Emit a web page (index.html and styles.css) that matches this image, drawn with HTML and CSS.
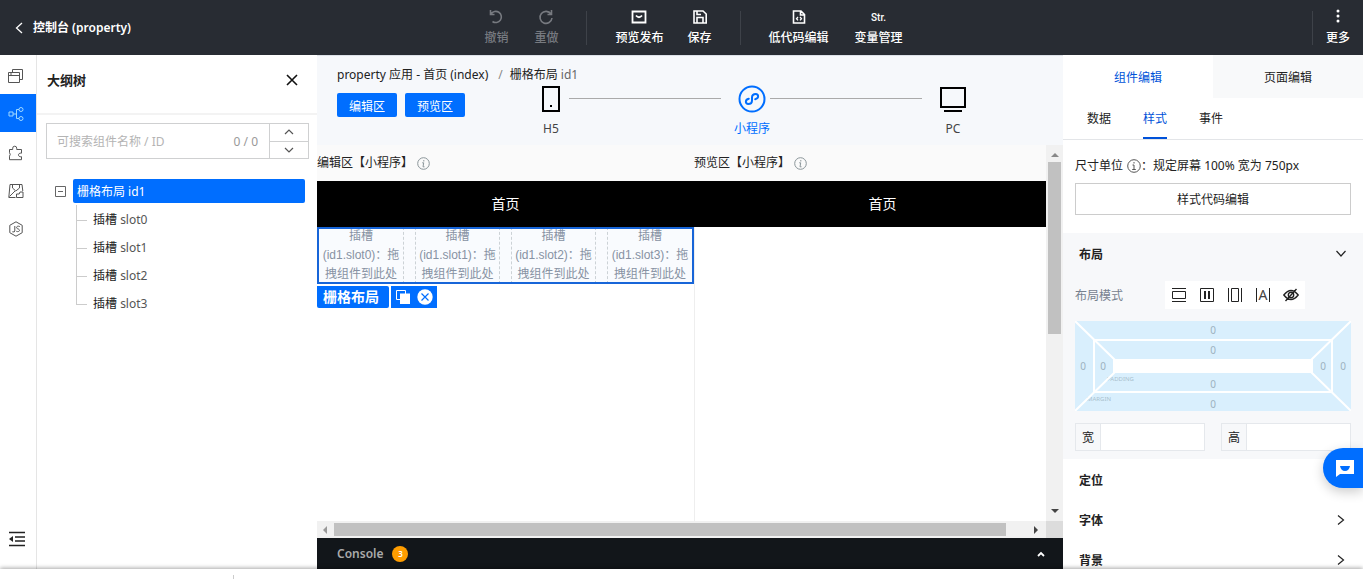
FILE: index.html
```html
<!DOCTYPE html>
<html lang="zh-CN">
<head>
<meta charset="utf-8">
<title>控制台 (property)</title>
<link rel="stylesheet" href="styles.css">
</head>
<body>
<header class="topbar">
  <div class="topbar-side">
    <a class="brand" href="#">
      <svg width="8" height="12" viewBox="0 0 8 12" fill="none" stroke="currentColor" stroke-width="1.3"><path d="M7 1 1.500 6 7 11"/></svg>
      <span>控制台 (property)</span>
    </a>
  </div>
  <nav class="tools">
    <div class="tool-group">
      <button class="tool" disabled>
        <svg width="16" height="16" viewBox="0 0 16 16" fill="none" stroke="currentColor" stroke-width="1.6"><path d="M2.500 1v4.500h4M3 5A5.600 5.600 0 1 1 4.500 12.500"/></svg>
        <span>撤销</span>
      </button>
      <button class="tool" disabled>
        <svg width="16" height="16" viewBox="0 0 16 16" fill="none" stroke="currentColor" stroke-width="1.6"><path d="M13.500 1v4.500h-4M13 5A6 6 0 1 0 14 9"/></svg>
        <span>重做</span>
      </button>
    </div>
    <div class="rule"></div>
    <div class="tool-group tight">
      <button class="tool">
        <svg width="16" height="16" viewBox="0 0 16 16" fill="none" stroke="currentColor" stroke-width="1.8"><path d="M1.500 2.500h13v11h-13z"/><path d="M5 6.500q3 3.500 6 0"/></svg>
        <span>预览发布</span>
      </button>
      <button class="tool">
        <svg width="16" height="16" viewBox="0 0 16 16" fill="none" stroke="currentColor" stroke-width="1.6"><path d="M2 2h9l3.200 3v9H2zM5 14V8.500h6V14M5 2v3.500h4"/></svg>
        <span>保存</span>
      </button>
    </div>
    <div class="rule"></div>
    <div class="tool-group">
      <button class="tool">
        <svg width="16" height="16" viewBox="0 0 16 16" fill="none" stroke="currentColor" stroke-width="1.6"><path d="M2.500 2h7.500l3.500 3.500V14h-11zM9.500 2v4h4"/><path d="M7 8 5.500 9.700 7 11.400M9 8l1.500 1.700L9 11.400" stroke-width="1.300"/></svg>
        <span>低代码编辑</span>
      </button>
      <button class="tool">
        <span class="glyph">Str.</span>
        <span>变量管理</span>
      </button>
    </div>
  </nav>
  <div class="topbar-side end">
    <div class="rule"></div>
    <button class="tool">
      <svg width="16" height="16" viewBox="0 0 16 16" fill="currentColor"><circle cx="8" cy="2" r="1.500"/><circle cx="8" cy="7" r="1.500"/><circle cx="8" cy="12" r="1.500"/></svg>
      <span>更多</span>
    </button>
  </div>
</header>

<main class="workspace">
  <nav class="rail">
    <button class="rail-item" aria-label="页面"><svg width="16" height="16" viewBox="0 0 16 16" fill="none" stroke="currentColor"><path d="M.5 4.500h11v10H.5zM.5 7.500h11M2 6h2M4.500 4.500v-3h10v10h-3"/></svg></button>
    <button class="rail-item active" aria-label="大纲树"><svg width="16" height="16" viewBox="0 0 16 16" fill="none" stroke="currentColor"><path d="M1 6h4v4H1zM5 8h3M11 3.500H8.500v9H11"/><circle cx="13" cy="3.500" r="2"/><circle cx="13" cy="12.500" r="2"/></svg></button>
    <button class="rail-item" aria-label="组件"><svg width="16" height="16" viewBox="0 0 16 16" fill="none" stroke="currentColor"><path d="M1.500 4.500h3.200V3.200a2 2 0 0 1 4 0v1.300h4.800v3.700c-4-.8-4 4.300 0 3.500v3h-12v-3.500q1.500-2 0-3.500z"/></svg></button>
    <button class="rail-item" aria-label="素材"><svg width="16" height="16" viewBox="0 0 16 16" fill="none" stroke="currentColor"><path d="M7.500 14.500H.8L2 1.500h12l.8 6.500M4.500 1.500V5l3.300 3 3.700-3V1.500M1.500 13.500 7 8M8.500 14.500h6.500V9h-3l-.8 2H8.500z"/></svg></button>
    <button class="rail-item" aria-label="脚本"><svg width="16" height="16" viewBox="0 0 16 16" fill="none" stroke="currentColor"><path d="M8 .8 14.200 4.300v7.400L8 15.200 1.800 11.700V4.300zM6.800 5v5q0 1.500-2.500.8M11.800 5.500C8 4.200 8 7.500 9.700 7.800c3 .6 2 3.800-1.400 2.500"/></svg></button>
    <button class="rail-item last" aria-label="收起"><svg width="18" height="16" viewBox="0 0 18 16" fill="none" stroke="#222" stroke-width="1.500"><path d="M1 1.500h16M7 6h10M7 10h10M1 14.500h16"/><path d="M1 8l4-3v6z" fill="#222" stroke="none"/></svg></button>
  </nav>

  <aside class="outline">
    <div class="outline-head">
      <h2>大纲树</h2>
      <button class="plain" aria-label="关闭"><svg width="12" height="12" viewBox="0 0 12 12" stroke="#111" stroke-width="1.600"><path d="M1 1l10 10M11 1 1 11"/></svg></button>
    </div>
    <div class="search">
      <input type="text" aria-label="搜索组件" placeholder="可搜索组件名称 / ID">
      <span class="count">0 / 0</span>
      <div class="stepper">
        <button aria-label="上一个"><svg width="10" height="6" viewBox="0 0 10 6" fill="none" stroke="currentColor" stroke-width="1.200"><path d="M1 5l4-4 4 4"/></svg></button>
        <button aria-label="下一个"><svg width="10" height="6" viewBox="0 0 10 6" fill="none" stroke="currentColor" stroke-width="1.200"><path d="M1 1l4 4 4-4"/></svg></button>
      </div>
    </div>
    <div class="tree">
      <div class="tree-root">
        <button class="plain" aria-label="折叠"><svg width="11" height="11" viewBox="0 0 11 11" fill="none" stroke="#666"><path d="M.5.5h10v10H.5zM3 5.500h5"/></svg></button>
        <a class="node selected" href="#">栅格布局 id1</a>
      </div>
      <ul class="branch">
        <li><a href="#">插槽 <span class="slot-name">slot0</span></a></li>
        <li><a href="#">插槽 <span class="slot-name">slot1</span></a></li>
        <li><a href="#">插槽 <span class="slot-name">slot2</span></a></li>
        <li><a href="#">插槽 <span class="slot-name">slot3</span></a></li>
      </ul>
    </div>
  </aside>

  <section class="stage">
    <div class="stage-head">
      <div class="crumbs"><span>property 应用 - 首页 (index)</span><span class="slash">/</span><span>栅格布局 <span class="muted">id1</span></span></div>
      <div class="stage-row">
        <div class="views">
          <button class="primary">编辑区</button>
          <button class="primary">预览区</button>
        </div>
        <div class="steps">
          <button class="step"><svg width="28" height="28" viewBox="0 0 28 28" fill="none" stroke="#000" stroke-width="2"><path d="M6 2h16v24H6z"/><path d="M13 21h2"/></svg><span>H5</span></button>
          <div class="link"></div>
          <button class="step current"><svg width="28" height="28" viewBox="0 0 28 28" fill="none" stroke="currentColor" stroke-width="2"><circle cx="14" cy="14" r="12.500"/><path d="M10.800 13.800c-4 .8-3.600 5.200-.6 5.200 2.200 0 3.800-1.500 3.800-3.500v-3c0-2 1.600-3.500 3.800-3.500 3 0 3.400 4.400-.6 5.200" stroke-linecap="round"/></svg><span>小程序</span></button>
          <div class="link"></div>
          <button class="step"><svg width="28" height="28" viewBox="0 0 28 28" fill="none" stroke="#000" stroke-width="2"><path d="M2 3h24v19H2zM5 26h18"/></svg><span>PC</span></button>
        </div>
      </div>
    </div>

    <div class="canvas-frame">
      <div class="canvas">
        <div class="pane">
          <div class="pane-title"><span>编辑区【小程序】</span><svg width="13" height="13" viewBox="0 0 13 13" fill="none" stroke="currentColor"><circle cx="6.500" cy="6.500" r="5.800"/><path d="M6.800 3v1.500M5.200 5.800h1.500L6 9.800h1.500"/></svg></div>
          <div class="page-bar">首页</div>
          <div class="grid-block">
            <div class="slot">插槽(id1.slot0)：拖拽组件到此处</div>
            <div class="slot">插槽(id1.slot1)：拖拽组件到此处</div>
            <div class="slot">插槽(id1.slot2)：拖拽组件到此处</div>
            <div class="slot">插槽(id1.slot3)：拖拽组件到此处</div>
          </div>
          <div class="tags">
            <span class="tag">栅格布局</span>
            <span class="tag-actions">
              <button class="plain" aria-label="复制"><svg width="16" height="16" viewBox="0 0 16 16"><path d="M5 10.500H1.500v-9h9V5" fill="none" stroke="#fff"/><path d="M5 4.500h10V15H5z" fill="#fff"/></svg></button>
              <button class="plain" aria-label="删除"><svg width="16" height="16" viewBox="0 0 16 16"><circle cx="8" cy="8" r="7.700" fill="#fff"/><path d="M4.500 4.500l7 7M11.500 4.500l-7 7" stroke="#006eff" stroke-width="1.200"/></svg></button>
            </span>
          </div>
        </div>
        <div class="pane">
          <div class="pane-title"><span>预览区【小程序】</span><svg width="13" height="13" viewBox="0 0 13 13" fill="none" stroke="currentColor"><circle cx="6.500" cy="6.500" r="5.800"/><path d="M6.800 3v1.500M5.200 5.800h1.500L6 9.800h1.500"/></svg></div>
          <div class="page-bar">首页</div>
        </div>
      </div>
      <div class="scroll-y"><svg width="8" height="5"><path d="M0 5l4-4 4 4z" fill="#888"/></svg><div class="thumb"></div><svg class="push" width="8" height="5"><path d="M0 0h8L4 4z" fill="#444"/></svg></div>
      <div class="scroll-x"><svg width="5" height="8"><path d="M5 0v8L1 4z" fill="#999"/></svg><div class="thumb"></div><svg class="push" width="5" height="8"><path d="M0 0l4 4-4 4z" fill="#444"/></svg></div>
      <div class="scroll-corner"></div>
    </div>

    <div class="console">
      <span>Console</span><span class="badge">3</span>
      <button class="plain push" aria-label="展开"><svg width="8" height="6" viewBox="0 0 8 6" fill="none" stroke="#fff" stroke-width="1.800"><path d="M1 5l3-3 3 3"/></svg></button>
    </div>
  </section>

  <aside class="props">
    <div class="tabs">
      <button class="tab on">组件编辑</button>
      <button class="tab">页面编辑</button>
    </div>
    <div class="subtabs">
      <button class="subtab">数据</button>
      <button class="subtab on">样式</button>
      <button class="subtab">事件</button>
    </div>
    <div class="unit-block">
      <div class="unit"><span>尺寸单位</span><svg width="14" height="14" viewBox="0 0 14 14" fill="none" stroke="#555"><circle cx="7" cy="7" r="6.300"/><path d="M7 3v1.500M5.500 6H7v4M5.200 10.500h3.600"/></svg><span>：规定屏幕 100% 宽为 750px</span></div>
      <button class="code-btn">样式代码编辑</button>
    </div>
    <div class="layout-block">
      <button class="fold"><span>布局</span><svg width="12" height="8" viewBox="0 0 12 8" fill="none" stroke="#222" stroke-width="1.200"><path d="M1.500 1 6 6l4.500-5"/></svg></button>
      <div class="mode">
        <span>布局模式</span>
        <div class="mode-icons">
          <button class="plain" aria-label="块级"><svg width="16" height="16" viewBox="0 0 16 16" fill="none" stroke="#222"><path d="M1 1.500h14M1 14.500h14M1.500 4.500h13v7h-13z"/></svg></button>
          <button class="plain" aria-label="弹性"><svg width="16" height="16" viewBox="0 0 16 16" fill="none" stroke="#222"><path d="M1.500 1.500h13v13h-13z"/><path d="M6 4v8M10 4v8" stroke-width="2"/></svg></button>
          <button class="plain" aria-label="行内块"><svg width="16" height="16" viewBox="0 0 16 16" fill="none" stroke="#222"><path d="M1.500 1v14M14.500 1v14M4.500 1.500h7v13h-7z"/></svg></button>
          <button class="plain inline-mode" aria-label="行内"><span>A</span></button>
          <button class="plain" aria-label="隐藏"><svg width="16" height="16" viewBox="0 0 16 16" fill="none" stroke="#222" stroke-width="1.400"><path d="M.8 8Q8-1 15.200 8 8 17 .8 8zM2.500 14 13.500 2"/><circle cx="8" cy="8" r="2.700"/></svg></button>
        </div>
      </div>
      <svg class="box-model" viewBox="0 0 276 90">
        <path d="M0 0h276v90H0z" fill="#d9effd"/>
        <g class="hint"><text x="12" y="80">MARGIN</text><text x="32" y="60">PADDING</text></g>
        <path d="M0 0l40 39M276 0l-40 39M0 90l40-39M276 90l-40-39M19 19h238v52H19z" fill="none" stroke="#fff" stroke-width="2"/>
        <path d="M38 38h200v14H38z" fill="#fff"/>
        <g class="zero"><text x="138" y="13">0</text><text x="138" y="33">0</text><text x="138" y="67">0</text><text x="138" y="87">0</text><text x="8" y="49">0</text><text x="28" y="49">0</text><text x="248" y="49">0</text><text x="268" y="49">0</text></g>
      </svg>
      <div class="sizes">
        <label class="size"><span>宽</span><input type="text"></label>
        <label class="size"><span>高</span><input type="text"></label>
      </div>
    </div>
    <div class="folds">
      <button class="fold"><span>定位</span></button>
      <button class="fold"><span>字体</span><svg width="8" height="12" viewBox="0 0 8 12" fill="none" stroke="#222" stroke-width="1.200"><path d="M1 1.500 6.500 6 1 10.500"/></svg></button>
      <button class="fold"><span>背景</span><svg width="8" height="12" viewBox="0 0 8 12" fill="none" stroke="#222" stroke-width="1.200"><path d="M1 1.500 6.500 6 1 10.500"/></svg></button>
    </div>
  </aside>
</main>
<footer class="dock"></footer>
<button class="chat" aria-label="客服"><svg width="18" height="17" viewBox="0 0 18 17"><path d="M0 0h18v14H4l-4 3z" fill="#fff"/><path d="M4 6h10q-1 5-5 5T4 6z" fill="#006eff"/></svg></button>
</body>
</html>
```
FILE: styles.css
```css
* { box-sizing: border-box; }
body {
  margin: 0;
  height: 100vh;
  display: flex;
  flex-direction: column;
  overflow: hidden;
  font: 12px/18px "Noto Sans", "Noto Sans CJK SC", sans-serif;
  color: #222;
  background: #fff;
}
button { font: inherit; color: inherit; background: none; border: 0; padding: 0; }
input { font: inherit; min-width: 0; border: 0; outline: 0; }
a { color: inherit; text-decoration: none; }
svg { display: block; flex: none; }
.plain { display: flex; }
.push { margin-left: auto; }

.topbar { display: flex; align-items: center; height: 55px; flex: none; background: #282c33; color: #fff; }
.topbar-side { flex: 1; display: flex; align-items: center; padding-left: 15px; }
.topbar-side.end { justify-content: flex-end; gap: 13px; padding-right: 13px; }
.brand { display: flex; align-items: center; gap: 10px; padding-top: 1px; font-weight: 600; }
.tools { display: flex; align-items: center; padding-left: 37px; }
.tool-group { display: flex; gap: 26px; }
.tool-group.tight { gap: 24px; }
.tool { display: flex; flex-direction: column; align-items: center; gap: 4px; font-weight: 500; white-space: nowrap; }
.tool:disabled { color: #777a80; }
.glyph { height: 16px; font: 500 10px/18px Roboto, sans-serif; }
.rule { width: 1px; height: 34px; background: #3e4249; }
.tools .rule { margin: 0 28px; }

.workspace { flex: 1; min-height: 0; display: flex; overflow: hidden; }
.rail { width: 37px; flex: none; display: flex; flex-direction: column; border-right: 1px solid #e5e5e5; padding: 1px 0 20px; color: #555; }
.rail-item { display: flex; align-items: center; justify-content: center; height: 38px; padding: 2px 4px 0 0; }
.rail-item.active { background: #006eff; color: #9fd8ff; }
.rail-item.active ~ .rail-item { padding-top: 4px; }
.rail .rail-item.last { margin-top: auto; height: 20px; padding: 0 2px 0 0; }

.outline { width: 280px; flex: none; background: #fff; }
.outline-head { display: flex; align-items: center; justify-content: space-between; padding: 15px 19px 23px 10px; border-bottom: 2px solid #f3f3f3; }
.outline-head h2 { margin: 0; font-size: 13px; line-height: 20px; font-weight: 600; }
.search { display: flex; align-items: stretch; height: 36px; margin: 8px 8px 20px 9px; border: 1px solid #cfd0d1; color: #999; }
.search input { flex: 1; padding: 2px 10px 0; color: #222; background: none; }
.search input::placeholder { color: #b4b4b4; }
.count { padding-right: 11px; line-height: 36px; }
.stepper { width: 39px; display: flex; flex-direction: column; border-left: 1px solid #cfd0d1; color: #555; }
.stepper button { flex: 1; display: flex; align-items: center; justify-content: center; }
.stepper button + button { border-top: 1px solid #cfd0d1; }
.tree { padding: 0 12px 0 18px; }
.tree-root { display: flex; align-items: center; gap: 7px; }
.node { flex: 1; height: 24px; line-height: 26px; padding: 0 4px; border-radius: 2px; }
.node.selected { background: #006eff; color: #fff; }
.branch { list-style: none; margin: 2px 0 0 21px; padding: 0; }
.branch li { display: flex; height: 28px; line-height: 30px; }
.branch li::before { content: ""; width: 10px; height: 15px; margin-right: 6px; border: solid #ccc; border-width: 0 0 1px 1px; }
.branch li:not(:last-child) { background: linear-gradient(#ccc, #ccc) 0 0 / 1px 100% no-repeat; }
.slot-name { color: #555; }

.stage { flex: 1; min-width: 0; display: flex; flex-direction: column; }
.stage-head { flex: none; padding: 10px 92px 7px 20px; background: #f6f8fb; border-top: 1px solid #dde1e8; }
.crumbs { display: flex; }
.slash { margin: 0 7px 0 10px; color: #888; }
.muted { color: #666; }
.stage-row { display: flex; gap: 68px; }
.views { display: flex; gap: 8px; padding-top: 9px; }
.primary { width: 60px; height: 24px; padding-top: 3px; border-radius: 2px; background: #006eff; color: #fff; }
.steps { flex: 1; display: flex; }
.step { width: 36px; flex: none; display: flex; flex-direction: column; align-items: center; gap: 7px; color: #444; white-space: nowrap; padding-top: 1px; }
.step.current { color: #006eff; }
.link { flex: 1; height: 1px; background: #aaa; margin: 14px 13px 0 0; }

.canvas-frame { flex: 1; min-height: 0; display: grid; grid-template: minmax(0, 1fr) 17px / minmax(0, 1fr) 17px; }
.canvas { display: flex; overflow: hidden; background: #fff; }
.pane { width: 377px; flex: none; }
.pane + .pane { border-left: 1px solid #eee; }
.pane-title { display: flex; align-items: center; gap: 4px; height: 36px; background: #fafafa; color: #222; }
.page-bar { height: 46px; background: #000; color: #fff; font-size: 14px; line-height: 46px; text-align: center; }
.pane + .pane .pane-title, .pane + .pane .page-bar { margin-left: -1px; }
.pane-title svg { color: #8a9599; }
.grid-block { display: grid; grid-template-columns: repeat(4, 1fr); column-gap: 11px; border: 2px solid #1765d8; background: #f9fbfe; height: 57px; overflow: hidden; }
.slot { font: 12px/19px "Liberation Sans", "Noto Sans CJK SC", sans-serif; color: #8792a3; text-align: center; border: dashed #ccd2d6; border-width: 0 1px; margin-top: -2px; }
.slot:first-child { border-left: 0; }
.slot:last-child { border-right: 0; }
.tags { display: flex; gap: 2px; padding-top: 2px; }
.tag { padding: 0 10px 0 6px; border-radius: 0 2px 2px 2px; background: #006eff; color: #fff; font-size: 14px; line-height: 22px; font-weight: 700; }
.tag-actions { display: flex; align-items: center; gap: 6px; padding: 0 4px; background: #006eff; }
.scroll-y, .scroll-x { display: flex; align-items: center; background: #f1f1f1; }
.scroll-y { flex-direction: column; padding: 7px 0; gap: 5px; }
.scroll-x { padding: 0 7px 0 5px; gap: 7px; }
.scroll-y .thumb { width: 13px; height: 172px; background: #c1c1c1; }
.scroll-y .push { margin: auto 0 0; }
.scroll-x .thumb { width: 672px; height: 13px; background: #c1c1c1; }
.scroll-corner { background: #dcdcdc; }
.console { flex: none; display: flex; align-items: center; gap: 9px; height: 31px; padding: 0 18px 0 20px; background: #12161a; color: #aaa; font-weight: 600; }
.badge { width: 16px; height: 16px; border-radius: 50%; background: #ff9d00; color: #fff; font-size: 8px; line-height: 16px; text-align: center; }

.props { width: 300px; flex: none; background: #fff; }
.tabs { display: flex; }
.tab { flex: 1; height: 43px; padding-top: 2px; background: #f8f9fa; }
.tab.on { background: #fff; color: #0052d9; }
.subtabs { display: flex; gap: 32px; padding: 0 24px; border-bottom: 1px solid #e3e5e8; }
.subtab { height: 41px; padding-top: 3px; border-bottom: 2px solid transparent; }
.subtab.on { color: #0052d9; border-color: #0052d9; }
.unit-block { padding: 17px 12px 18px; }
.unit { display: flex; align-items: center; margin-bottom: 8px; white-space: nowrap; }
.unit svg { margin-left: 4px; }
.code-btn { display: block; width: 100%; height: 32px; padding-top: 2px; border: 1px solid #ccc; }
.layout-block { padding: 1px 12px 8px; background: #f7f8fa; }
.fold { display: flex; align-items: center; justify-content: space-between; width: 100%; height: 40px; padding: 0 18px 0 16px; font-weight: 600; }
.fold span { padding-top: 2px; }
.layout-block .fold { padding: 0 4px; }
.mode { display: flex; align-items: center; gap: 42px; margin: 7px 0 12px; color: #76818f; }
.mode > span { padding-top: 2px; }
.mode-icons { display: flex; gap: 12px; padding: 6px; background: #fff; }
.inline-mode { width: 14px; height: 14px; margin: 1px; justify-content: center; border: solid #222; border-width: 0 1px; color: #444; line-height: 14px; font-size: 14px; }
.box-model { width: 100%; }
.zero { font: 10px "Noto Sans", sans-serif; fill: #9db2c0; text-anchor: middle; }
.hint { font: 6px "Noto Sans", sans-serif; fill: #a9bfcd; }
.sizes { display: flex; gap: 16px; margin-top: 12px; }
.size { flex: 1; display: flex; height: 28px; border: 1px solid #e5e8ec; line-height: 28px; }
.size span { width: 25px; text-align: center; border-right: 1px solid #e5e8ec; }
.size input { flex: 1; width: 0; background: #fff; }
.folds { padding-top: 1px; }
.dock { position: relative; flex: none; height: 10px; background: linear-gradient(#ccc, #ccc) 233px 6px / 1px 4px no-repeat #fff; box-shadow: 0 -1px 4px rgba(0, 0, 0, .35); }
.chat { position: fixed; right: 0; top: 448px; width: 40px; height: 40px; display: flex; align-items: center; justify-content: center; border-radius: 20px 0 0 20px; background: #006eff; box-shadow: 0 4px 12px rgba(0, 0, 0, .2); padding-left: 4px; }
```
